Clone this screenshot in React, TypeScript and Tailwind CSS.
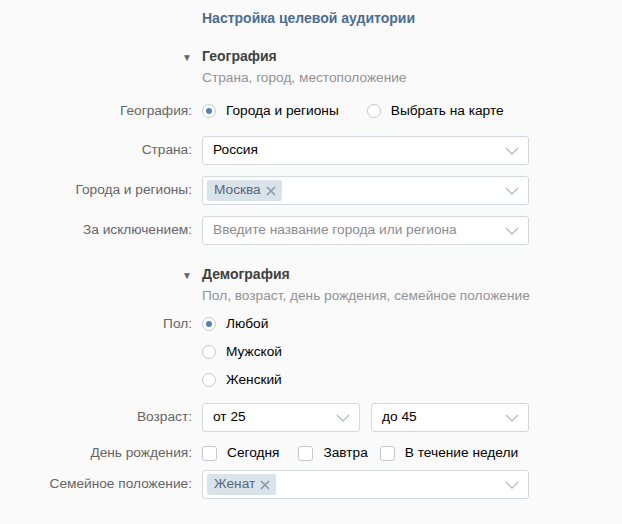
import React from 'react';

const Chevron: React.FC = () => (
    <svg width="14" height="8" viewBox="0 0 14 8" className="shrink-0">
        <path d="M1 1l6 6 6-6" fill="none" stroke="#b4bcc6" strokeWidth="1.3" />
    </svg>
);

const Radio: React.FC<{ checked?: boolean; label: string }> = ({ checked, label }) => (
    <div className="flex items-center h-[20px]">
        <span className="w-[14px] h-[14px] rounded-full border border-[#c5c8cc] bg-white flex items-center justify-center shrink-0">
            {checked && <span className="w-[6px] h-[6px] rounded-full bg-[#5181b8]" />}
        </span>
        <span className="ml-[10px] text-[#000]">{label}</span>
    </div>
);

const Check: React.FC<{ label: string }> = ({ label }) => (
    <div className="flex items-center">
        <span className="w-[15px] h-[15px] rounded-[3px] border border-[#c5c8cc] bg-white shrink-0" />
        <span className="ml-[10px] text-[#000]">{label}</span>
    </div>
);

const Select: React.FC<{ children?: React.ReactNode; className?: string }> = ({ children, className }) => (
    <div className={`h-[29px] bg-white border border-[#d3d9de] rounded-[3px] flex items-center pl-[4px] pr-[9px] ${className ?? 'w-[327px]'}`}>
        <div className="flex-1 flex items-center min-w-0">{children}</div>
        <Chevron />
    </div>
);

const Token: React.FC<{ label: string }> = ({ label }) => (
    <span className="h-[21px] flex items-center bg-[#dae2ea] rounded-[2px] pl-[7px] pr-[6px] text-[#55677d]">
        {label}
        <svg width="10" height="10" viewBox="0 0 10 10" className="ml-[5px]">
            <path d="M1 1l8 8M9 1L1 9" stroke="#8a9bb0" strokeWidth="1.7" />
        </svg>
    </span>
);

const Row: React.FC<{ label: string; children: React.ReactNode; className?: string }> = ({ label, children, className }) => (
    <div className={`flex items-center ${className ?? ''}`}>
        <div className="w-[192px] text-right text-[#656565] shrink-0 whitespace-nowrap">{label}</div>
        <div className="ml-[10px] flex items-center">{children}</div>
    </div>
);

const Section: React.FC<{ title: string; sub: string }> = ({ title, sub }) => (
    <div className="pl-[202px] relative">
        <span className="absolute left-[182px] top-[3px] text-[10px] text-[#5f6670]">▼</span>
        <div className="font-bold text-[14px] text-[#3f3f3f] leading-[18px]">{title}</div>
        <div className="text-[#939393] leading-[18px] mt-[4px]">{sub}</div>
    </div>
);

const App: React.FC = () => {
    return (
        <div className="w-[622px] h-[524px] bg-[#fafafa] text-[13.7px] overflow-hidden" style={{ fontFamily: '"Liberation Sans", Arial, sans-serif' }}>
            <div className="pl-[202px] pt-[9px] font-bold text-[14px] text-[#4a6d90] leading-[18px]">Настройка целевой аудитории</div>

            <div className="mt-[20px]">
                <Section title="География" sub="Страна, город, местоположение" />
            </div>

            <Row label="География:" className="mt-[14px] h-[20px]">
                <Radio checked label="Города и регионы" />
                <div className="ml-[28px]"><Radio label="Выбрать на карте" /></div>
            </Row>

            <Row label="Страна:" className="mt-[15px]">
                <Select><span className="pl-[6px] text-[#000]">Россия</span></Select>
            </Row>
            <Row label="Города и регионы:" className="mt-[11px]">
                <Select><Token label="Москва" /></Select>
            </Row>
            <Row label="За исключением:" className="mt-[11px]">
                <Select><span className="pl-[6px] text-[#8c8c8c]">Введите название города или региона</span></Select>
            </Row>

            <div className="mt-[20px]">
                <Section title="Демография" sub="Пол, возраст, день рождения, семейное положение" />
            </div>

            <Row label="Пол:" className="mt-[9px] h-[20px]">
                <Radio checked label="Любой" />
            </Row>
            <Row label="" className="mt-[8px] h-[20px]">
                <Radio label="Мужской" />
            </Row>
            <Row label="" className="mt-[8px] h-[20px]">
                <Radio label="Женский" />
            </Row>

            <Row label="Возраст:" className="mt-[13px]">
                <Select className="w-[158px]"><span className="pl-[6px] text-[#000]">от 25</span></Select>
                <Select className="w-[158px] ml-[11px]"><span className="pl-[6px] text-[#000]">до 45</span></Select>
            </Row>

            <Row label="День рождения:" className="mt-[12px] h-[18px]">
                <Check label="Сегодня" />
                <div className="ml-[19px]"><Check label="Завтра" /></div>
                <div className="ml-[12px]"><Check label="В течение недели" /></div>
            </Row>

            <Row label="Семейное положение:" className="mt-[8px]">
                <Select><Token label="Женат" /></Select>
            </Row>
        </div>
    );
};

export default App;
